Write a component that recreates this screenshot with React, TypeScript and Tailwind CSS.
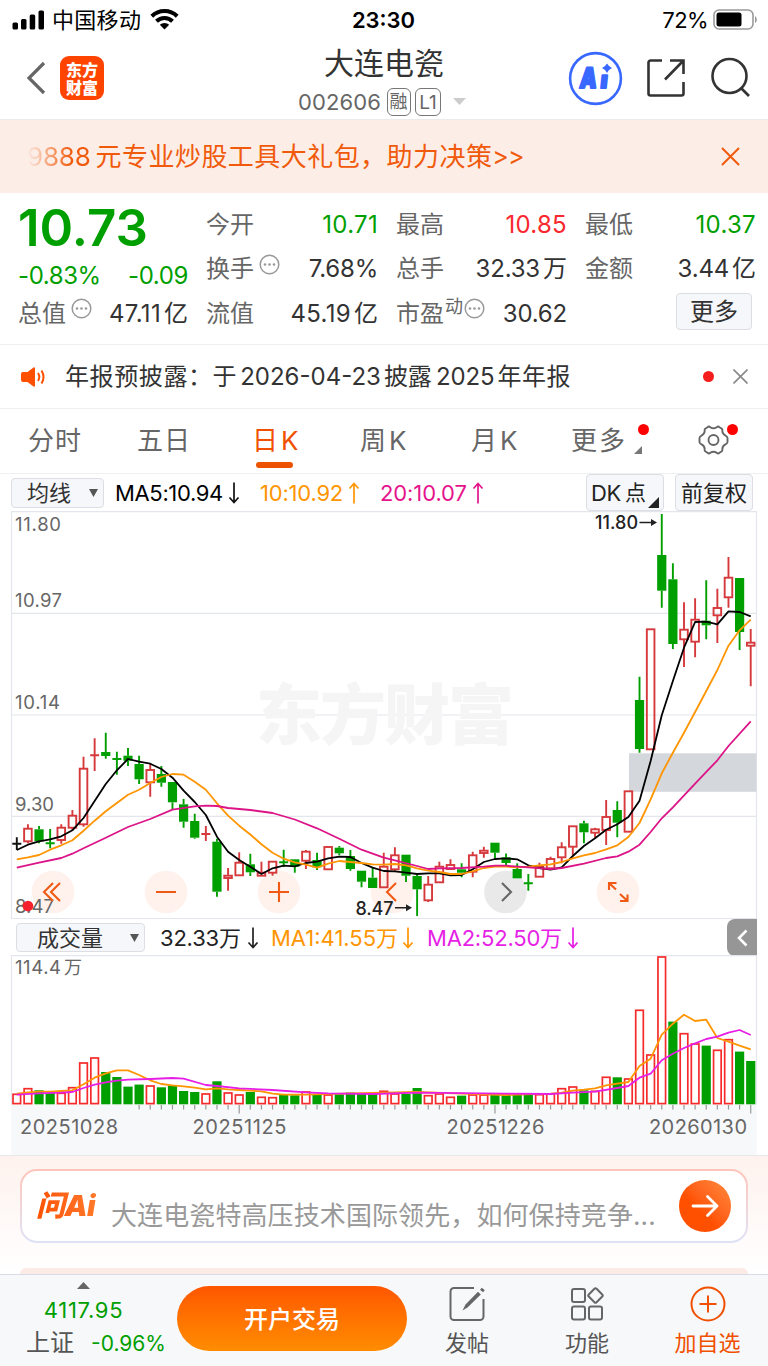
import { ReactNode } from 'react';

type Candle = [string, number, number, number, number];
type Point = [number, number];

const STEP = 11.12;
const FIRST = 16.8;
const GREEN = '#009f00';
const RED = '#d6393c';
const VOL_RED = '#f52b2b';

const FONT = "font-['Inter','Noto_Sans_CJK_SC',sans-serif]";

const xAt = (i: number) => FIRST + i * STEP;

// kind, high, body top, body bottom, low
const candles: Candle[] = [
	['k', 326.3, 332.7, 332.7, 339],
	['r', 313.3, 317.7, 330.3, 332.3],
	['g', 315, 318.3, 330.3, 332.3],
	['g', 318, 332.3, 332.3, 337.3],
	['r', 313.3, 316.7, 329, 332.7],
	['r', 299, 304.7, 316.7, 319],
	['r', 245.7, 257.7, 313.3, 315.7],
	['r', 227.3, 244.3, 244.3, 260],
	['g', 221.7, 241, 245, 247.7],
	['g', 240.7, 248, 248, 263.7],
	['g', 237, 244.7, 249.7, 255],
	['g', 244.7, 253, 268.3, 273],
	['r', 252, 259, 271.3, 285.7],
	['g', 255, 263, 271.7, 275.7],
	['g', 271, 271, 291.3, 298.3],
	['g', 288, 293.3, 310.7, 316.7],
	['g', 302.7, 310, 326.7, 327.7],
	['r', 315, 323, 323, 330],
	['g', 327.7, 330.7, 380.7, 385.7],
	['r', 357, 364.7, 367, 379.7],
	['r', 341.3, 351.7, 364.3, 364.3],
	['g', 342.7, 353.3, 361.3, 365],
	['r', 350.7, 361.7, 364.7, 364.7],
	['r', 350.7, 350.7, 361.7, 364.7],
	['g', 338.7, 351.3, 351.3, 355.7],
	['g', 348.3, 348.3, 355.7, 361.7],
	['r', 339, 340.7, 349.7, 358],
	['g', 341.7, 349, 356.3, 359],
	['r', 336, 336, 358.3, 358.3],
	['g', 335, 336.7, 342.3, 344.3],
	['g', 339, 345, 358, 359.7],
	['g', 359.7, 359.7, 370.7, 376.3],
	['g', 356.3, 366.7, 377, 377],
	['r', 341.7, 355.7, 376.3, 376.3],
	['r', 336.3, 344.3, 358.3, 360.7],
	['g', 343.7, 343.7, 364.7, 371],
	['g', 362.3, 365, 378.3, 405],
	['r', 365, 373.7, 389.3, 391],
	['r', 350.7, 355.7, 371.3, 371.3],
	['r', 348.3, 354, 358, 359],
	['g', 352.3, 358.3, 361.7, 366.3],
	['r', 340.7, 344.3, 360.7, 366.3],
	['r', 335.7, 339.7, 342, 346.7],
	['g', 331.7, 331.7, 341.7, 349],
	['g', 342.5, 346.3, 352, 355],
	['g', 352.3, 358, 367.3, 367.3],
	['g', 363, 372.3, 372.3, 379.7],
	['r', 351.7, 355.7, 365.7, 365.7],
	['r', 345.7, 348, 357.3, 357.3],
	['r', 331.3, 336.3, 346.3, 352.3],
	['r', 315.3, 315.3, 335.7, 344],
	['g', 309.7, 312.3, 321.3, 332.3],
	['r', 316.7, 318.3, 321.7, 326.7],
	['r', 289, 306, 319, 334],
	['g', 290.3, 299, 311.7, 326.3],
	['r', 280.3, 280.3, 320.7, 320.7],
	['g', 165.7, 189, 238, 241.7],
	['r', 118.3, 118.3, 238.3, 238.3],
	['g', 3, 44, 79.7, 96.7],
	['g', 52.3, 68.3, 133, 138],
	['r', 91.3, 118.7, 128.3, 156],
	['r', 87.3, 108.7, 130.7, 146.3],
	['g', 69.3, 109.7, 114.3, 128.3],
	['r', 77.7, 97, 104.3, 132],
	['r', 46, 66.7, 86.3, 96.7],
	['g', 67, 67, 121, 139],
	['r', 118, 131.7, 134.7, 175.3]
];

const ma5 = [
	339, 333.7, 330.3, 328.3, 325.3, 319.3, 307, 290, 273, 259.3, 248, 250.7, 252.7, 258, 266.7,
	279.7, 291, 304, 325.7, 340.7, 349, 355.7, 363, 357.3, 354.7, 355.3, 352, 350.7, 347.3, 345.7,
	346, 352, 356.7, 360, 360.3, 361.7, 363, 362.3, 362.3, 364.3, 364, 358.3, 351, 348, 347.3,
	348.3, 354.3, 357, 358.7, 356.3, 345, 335, 327.3, 318.7, 313.3, 306, 289.7, 250, 204.3, 170,
	136.7, 111, 110.7, 113.3, 100.3, 101, 105.3
];

const ma10 = [
	348.3, 346.3, 344, 338.7, 334.3, 329.3, 319.7, 309.7, 300.3, 292, 283.7, 278.7, 272, 266, 263,
	263.7, 270.7, 278.7, 292.3, 304.7, 314.7, 323.5, 333.3, 341.7, 347.7, 351.3, 353.7, 356.7,
	352.7, 350, 351, 352, 353.3, 353.7, 353, 354.3, 357.3, 359.7, 361, 363, 363, 360.3, 357, 355.7,
	355.7, 356.3, 355.7, 354.3, 353.3, 351, 347.3, 344.3, 342, 338.3, 334.3, 326, 312, 288.3, 262.3,
	241.7, 221.7, 201, 180, 159, 134.7, 119.3, 108.7
];

const ma20: Point[] = [
	[0, 356.7], [2, 351.7], [4, 347], [5, 342.7], [6, 337.3], [8, 326.7], [10, 316], [12, 308],
	[14, 298.7], [16, 295.3], [17, 294.7], [18, 295], [19, 297], [21, 299], [23, 302], [25, 308.5],
	[27, 317.3], [29, 327.7], [31, 338.7], [33, 346.7], [34, 349.3], [36, 355], [37, 358],
	[38, 357.3], [40, 357], [42, 355.7], [43, 354.7], [44, 354.7], [46, 356.3], [48, 358],
	[49, 357], [51, 352.7], [53, 347], [54, 345.3], [55, 340.7], [56, 333.7], [57, 321],
	[58, 307.3], [59, 296.3], [61, 272.7], [63, 249.3], [64, 235], [66, 210.3]
];

const volumeColors = 'rrggrrrrggggrggggrgrrgrrggrgrggggrrggrrrgrrggggrrrrgrrgrrrrgrrgrrgg';

const volumes = [
	10.7, 16.3, 14, 11.7, 11.7, 17.3, 42, 47, 32.3, 27.3, 17.7, 19.7, 19, 17, 18.7, 13.3, 12.3, 11,
	23, 12, 10, 12.3, 7.7, 7.3, 9.7, 9, 13, 9.7, 10, 10, 11.7, 11, 10.3, 13.7, 11, 10.3, 16.3, 9.3,
	11, 7.7, 8.7, 10, 10, 10, 9.3, 9.7, 9.3, 10.3, 11, 16.3, 18, 14, 13.7, 27.7, 27, 26, 94.7, 50,
	148, 82.7, 71.3, 61, 58.7, 54.7, 65.3, 52.7, 43.3
];

const volMa1: Point[] = [
	[0, 138.7], [1, 137.3], [2, 136.7], [3, 136.7], [4, 136], [5, 135.3], [6, 129.3], [7, 122.7],
	[8, 118.3], [9, 115.3], [10, 115.3], [11, 120], [12, 125.3], [13, 129], [14, 130.3],
	[15, 131.3], [16, 132.7], [17, 134.3], [18, 133.3], [19, 134.3], [20, 135], [21, 135.7],
	[22, 136.3], [23, 138.7], [24, 139.7], [26, 139.7], [30, 138.3], [36, 137], [40, 138.7],
	[44, 140], [48, 138.7], [49, 137.7], [50, 135.7], [51, 134.7], [52, 133.3], [53, 130.3],
	[54, 128.7], [55, 127], [56, 111], [57, 103.7], [58, 79.7], [59, 68.7], [60, 59.7], [61, 66],
	[62, 64.7], [63, 83], [64, 86.7], [65, 90.7], [66, 94.3]
];

const volMa2: Point[] = [
	[0, 139.7], [2, 138.3], [4, 137.7], [5, 137], [6, 133], [7, 129.7], [8, 127.3], [9, 125.7],
	[10, 124.7], [12, 124], [14, 123], [15, 123.7], [17, 130], [18, 131], [20, 133.3], [23, 135],
	[26, 137.3], [28, 138.3], [32, 139], [36, 137.7], [44, 138.7], [48, 139], [50, 137.7],
	[52, 136.7], [54, 133], [55, 131], [56, 122.7], [57, 118.7], [58, 105.3], [59, 98.7], [60, 93],
	[61, 88.3], [62, 84], [63, 81.7], [64, 77.7], [65, 75], [66, 80]
];

const toPoints = (list: Point[]) => list.map(([i, y]) => `${xAt(i)},${y}`).join(' ');
const indexed = (list: number[]) => list.map((y, i): Point => [i, y]);

function StatusBar() {
	return (
		<div className="h-10 pb-px grid grid-cols-3 items-center pl-[12px] pr-[10px] text-black">
			<div className="flex items-center">
				<svg width="33" height="20" viewBox="0 0 33 20">
					<rect x="0.5" y="12.5" width="5.5" height="7" rx="1.5" />
					<rect x="9" y="9" width="5.5" height="10.5" rx="1.5" />
					<rect x="17.7" y="4.5" width="5.5" height="15" rx="1.5" />
					<rect x="26.5" y="0.5" width="5.5" height="19" rx="1.5" />
				</svg>
				<span className="ml-[7px] text-[22px] tracking-[0.3px] leading-none whitespace-nowrap">中国移动</span>
				<svg className="ml-[9px]" width="29" height="21" viewBox="0 0 29 21">
					<path
						d="M1.8 7.2a18.3 18.3 0 0 1 25.4 0M6.5 12.2a11.5 11.5 0 0 1 16 0"
						fill="none"
						stroke="#000"
						strokeWidth="4"
					/>
					<path d="M14.5 20.5 9.8 15.8a6.8 6.8 0 0 1 9.4 0z" />
				</svg>
			</div>
			<div className="text-center text-[22px] font-semibold leading-none -ml-[3px]">23:30</div>
			<div className="flex items-center justify-end">
				<span className="text-[22px] tracking-[-0.6px] leading-none">72%</span>
				<svg className="ml-[5px]" width="45" height="21" viewBox="0 0 45 21">
					<rect x="1" y="1" width="39" height="19" rx="5" fill="none" stroke="#999" strokeWidth="1.6" />
					<rect x="3.5" y="3.5" width="25" height="14" rx="2.5" />
					<path d="M42 7.2c2.4.6 2.4 6 0 6.6z" fill="#999" />
				</svg>
			</div>
		</div>
	);
}

function Header() {
	return (
		<header className="h-20 border-b border-[#e9ebee] grid grid-cols-[250px_1fr_250px] pt-[2px]">
			<div className="flex items-center pl-[26px] pb-[6px]">
				<svg width="20" height="34" viewBox="0 0 20 34" fill="none" stroke="#666" strokeWidth="3.2">
					<path d="M18 2 3 17l15 15" />
				</svg>
				<div className="ml-[14px] w-11 h-11 rounded-[9px] bg-[#ff4400] flex flex-col items-center justify-center font-['Noto_Sans_CJK_SC',sans-serif] text-white font-black text-[16px] leading-[18px]">
					<span>东方</span>
					<span>财富</span>
				</div>
			</div>
			<div className="flex flex-col items-center">
				<h1 className="text-[30px] leading-[42px] text-[#333]">大连电瓷</h1>
				<div className="flex items-center h-[35px] text-[#666] -ml-[4px]">
					<span className="text-[22px] tracking-[0.1px] leading-none">002606</span>
					<span className="ml-[6px] w-6 h-7 border border-[#777] rounded-[6px] text-[18px] leading-[26px] text-center">
						<span className="-ml-px">融</span>
					</span>
					<span className="ml-[4px] w-[26px] h-7 border border-[#777] rounded-[6px] text-[19px] leading-[27px] text-center">
						L1
					</span>
					<svg className="ml-[12px]" width="13" height="8" viewBox="0 0 13 8">
						<path d="M0 0h13L6.5 7z" fill="#ccc" />
					</svg>
				</div>
			</div>
			<div className="flex items-center pl-[50px] pb-[5px]">
				<svg width="55" height="55" viewBox="0 0 55 55">
					<circle cx="27.5" cy="27.5" r="25.4" fill="none" stroke="#3868ff" strokeWidth="2.6" />
					<g
						transform="skewX(-6)"
						fill="#3868ff"
						stroke="#3868ff"
						strokeWidth="2.2"
						strokeLinejoin="round"
						fontWeight="900"
					>
						<text x="15" y="37" fontSize="28" textLength="17" lengthAdjust="spacingAndGlyphs">A</text>
						<text x="36" y="37.5" fontSize="23">ı</text>
					</g>
					<path d="M39 12.5 41 15l3 2-3 2-2 3-2-3-3-2 3-2z" fill="#3868ff" />
				</svg>
				<svg className="ml-[23px]" width="40" height="40" viewBox="0 0 40 40" fill="none" stroke="#333" strokeWidth="2.6">
					<path d="M16 2.5H4.5a2 2 0 0 0-2 2v31a2 2 0 0 0 2 2h31a2 2 0 0 0 2-2V24" />
					<path d="M24 2.5h13.5V16M37 3 19 21.5" />
				</svg>
				<svg className="ml-[24px]" width="42" height="42" viewBox="0 0 42 42" fill="none" stroke="#333" strokeWidth="2.6">
					<circle cx="19.5" cy="19" r="17" />
					<path d="m31 31 8 8" />
				</svg>
			</div>
		</header>
	);
}

function Banner() {
	return (
		<div className="h-[73px] bg-[#fcede7] flex items-center justify-between pl-[27px] pr-[28px] text-[#f05a0a]">
			<div className="flex items-center text-[26px] leading-none whitespace-nowrap">
				<span className="mr-[5px] tracking-[-0.2px] bg-linear-to-r from-[#f05a0a]/0 to-[#f05a0a] to-70% bg-clip-text text-transparent">
					9888
				</span>
				<span className="tracking-[0.45px]">元专业炒股工具大礼包，助力决策</span>
				<span className="text-[25px] tracking-[-0.8px]">&gt;&gt;</span>
			</div>
			<svg width="19" height="19" viewBox="0 0 19 19" stroke="#f05a0a" strokeWidth="2">
				<path d="m1 1 17 17M18 1 1 18" />
			</svg>
		</div>
	);
}

function Hint() {
	return (
		<svg className="ml-[5px] mb-[10px]" width="21" height="21" viewBox="0 0 21 21">
			<circle cx="10.5" cy="10.5" r="9.3" fill="none" stroke="#999" strokeWidth="1.5" />
			<g fill="#999">
				<circle cx="6" cy="10.5" r="1.3" />
				<circle cx="10.5" cy="10.5" r="1.3" />
				<circle cx="15" cy="10.5" r="1.3" />
			</g>
		</svg>
	);
}

interface StatProps {
	label: string;
	value: string;
	unit?: string;
	color?: string;
	extra?: ReactNode;
}

function Stat({ label, value, unit, color = 'text-[#333]', extra }: StatProps) {
	// the digit 1 is narrow, so loosen the numbers that contain it
	const spacing = value.includes('1') ? 'tracking-[0.3px]' : 'tracking-[-0.2px]';

	return (
		<div className="h-[44.5px] flex items-center justify-between leading-none whitespace-nowrap">
			<div className="flex items-center text-[24px] text-[#666]">
				{label}
				{extra}
			</div>
			<div className={`flex items-center ${color}`}>
				<span className={`text-[24px] ${spacing}`}>{value}</span>
				{unit && <span className="ml-[3px] text-[24px]">{unit}</span>}
			</div>
		</div>
	);
}

function Quote() {
	return (
		<section className="h-[152px] border-b border-[#f0f0f2] pl-[18px] pr-[12px] pt-[9.5px] grid grid-cols-[170px_172px_171px_171px] gap-x-[18px]">
			<div className="text-[#009f00]">
				<div className="h-[51px] text-[51px] leading-[49px] font-semibold">10.73</div>
				<div className="h-[38px] flex items-center justify-between text-[24px] pt-[6px] tracking-[-0.4px] leading-none">
					<span>-0.83%</span>
					<span>-0.09</span>
				</div>
				<Stat label="总值" value="47.11" unit="亿" extra={<Hint />} />
			</div>
			<div>
				<Stat label="今开" value="10.71" color="text-[#009f00]" />
				<Stat label="换手" value="7.68%" extra={<Hint />} />
				<Stat label="流值" value="45.19" unit="亿" />
			</div>
			<div>
				<Stat label="最高" value="10.85" color="text-[#f9282e]" />
				<Stat label="总手" value="32.33" unit="万" />
				<Stat
					label="市盈"
					value="30.62"
					extra={
						<>
							<span className="ml-px mb-[13px] text-[18px]">动</span>
							<span className="-ml-[4px]">
								<Hint />
							</span>
						</>
					}
				/>
			</div>
			<div>
				<Stat label="最低" value="10.37" color="text-[#009f00]" />
				<Stat label="金额" value="3.44" unit="亿" />
				<div className="flex justify-end pr-[4px] pt-px">
					<button className="w-[76px] h-[37px] pt-px rounded-[4px] border border-[#dcdee4] bg-[#f6f7fa] text-[24px] leading-none text-[#333]">
						更多
					</button>
				</div>
			</div>
		</section>
	);
}

function Notice() {
	return (
		<div className="h-16 border-b border-[#f0f0f2] flex items-center pl-[21px] pr-[20px] text-[#333]">
			<svg width="24" height="20" viewBox="0 0 24 20">
				<path d="M2 5h4.5l6-4.6Q14 0 14 1.5v17q0 1.5-1.5 1.1L6.5 15H2q-2 0-2-2V7q0-2 2-2z" fill="#ff5000" />
				<path d="M17 6q2.6 4 0 8M20.5 3.5q4 6.5 0 13" fill="none" stroke="#ff5000" strokeWidth="2" />
			</svg>
			<div className="ml-[20px] flex items-center text-[24px] leading-none whitespace-nowrap">
				<span className="tracking-[0.6px]">年报预披露：于</span>
				<span className="ml-[3px]">2026-04-23</span>
				<span className="ml-[3px]">披露</span>
				<span className="ml-[4px] tracking-[-0.1px]">2025</span>
				<span className="ml-[3px] tracking-[0.5px]">年年报</span>
			</div>
			<span className="ml-auto w-[11px] h-[11px] rounded-full bg-[#f51e1e]" />
			<svg className="ml-[19px]" width="15" height="15" viewBox="0 0 15 15" stroke="#888" strokeWidth="1.6">
				<path d="m0.5 0.5 14 14M14.5 0.5l-14 14" />
			</svg>
		</div>
	);
}

function Tabs() {
	return (
		<nav className="relative h-[65px] border-b border-[#f0f0f2] pl-[28px] flex items-center text-[26px] leading-none text-[#666] whitespace-nowrap">
			<span className="w-[109px] tracking-[1px]">分时</span>
			<span className="w-[115px] tracking-[1px]">五日</span>
			<span className="w-[108px] flex gap-[3px] text-[#f05000]">
				<span>日</span>
				<span>K</span>
			</span>
			<span className="w-[111px] flex gap-[3px]">
				<span>周</span>
				<span>K</span>
			</span>
			<span className="w-[100px] flex gap-[3px]">
				<span>月</span>
				<span>K</span>
			</span>
			<span className="tracking-[2px]">更多</span>
			<svg className="ml-[7px] mt-[18px]" width="8" height="8" viewBox="0 0 8 8">
				<path d="M8 0v8H0z" fill="#777" />
			</svg>
			<svg className="ml-[56px] mb-[2px]" width="31" height="30" viewBox="0 0 31 30" fill="none" stroke="#666" strokeWidth="1.9">
				<path
					strokeLinejoin="round"
					d="M9.5 2.2Q11 1 12.3 2.2q3.2 2.2 6.4 0Q20 1 21.5 2.2l2.3 1.5q.8.8.5 2.3.2 3.3 3.5 4.8 1.5.6 1.7 2.2v4q-.2 1.6-1.7 2.2-3.3 1.5-3.5 4.8.3 1.5-.5 2.3l-2.3 1.5q-1.5 1.2-2.8 0-3.2-2.2-6.4 0-1.3 1.2-2.8 0l-2.3-1.5q-.8-.8-.5-2.3-.2-3.3-3.5-4.8Q1.7 18.6 1.5 17v-4q.2-1.6 1.7-2.2 3.3-1.5 3.5-4.8-.3-1.5.5-2.3z"
				/>
				<circle cx="15.5" cy="15" r="5" />
			</svg>
			<span className="absolute left-[256px] bottom-[5px] w-[37px] h-[6px] rounded-full bg-[#ec5200]" />
			<span className="absolute left-[638px] top-[15px] w-[11px] h-[11px] rounded-full bg-[#ff0000]" />
			<span className="absolute left-[727px] top-[15px] w-[11px] h-[11px] rounded-full bg-[#ff0000]" />
		</nav>
	);
}

function Arrow({ up, color }: { up?: boolean; color: string }) {
	return (
		<svg width="12" height="22" viewBox="0 0 12 22" fill="none" stroke={color} strokeWidth="1.7">
			{up ? <path d="M6 21.5V1.5M1.5 6.5 6 1.5l4.5 5" /> : <path d="M6 .5v20M1.5 15.5 6 20.5l4.5-5" />}
		</svg>
	);
}

function MaRow() {
	return (
		<div className="h-[37px] pl-[11px] pr-[15px] flex items-center text-[22px] leading-none whitespace-nowrap">
			<button className="w-[93px] h-[30px] pl-[15px] pr-[5px] flex items-center justify-between rounded-[4px] border border-[#dcdee4] bg-[#f6f7fa] text-[#333] text-[22px]">
				均线
				<svg width="9" height="8" viewBox="0 0 9 8">
					<path d="M0 0h9L4.5 8z" fill="#555" />
				</svg>
			</button>
			<span className="ml-[11px] w-[113px] tracking-[-0.35px] text-black">MA5:10.94</span>
			<Arrow color="#111" />
			<span className="ml-[20px] w-[88px] tracking-[-0.2px] text-[#ff9500]">10:10.92</span>
			<Arrow up color="#ff9500" />
			<span className="ml-[20px] w-[92px] tracking-[-0.1px] text-[#e6148c]">20:10.07</span>
			<Arrow up color="#e6148c" />
			<button className="relative ml-auto w-[78px] h-[37px] pl-[4px] flex items-center gap-[4px] rounded-[4px] border border-[#dcdee4] bg-[#f6f7fa] text-[#222]">
				<span className="tracking-[-0.3px]">DK</span>
				<span className="text-[21px]">点</span>
				<svg className="absolute right-[4px] bottom-[2px]" width="11" height="11" viewBox="0 0 11 11">
					<path d="M11 0v11H0z" fill="#222" />
				</svg>
			</button>
			<button className="ml-[11px] w-[78px] h-[37px] rounded-[4px] border border-[#dcdee4] bg-[#f6f7fa] text-[#222] text-[22px]">
				前复权
			</button>
		</div>
	);
}

function CandleShape({ candle, x }: { candle: Candle; x: number }) {
	const [kind, high, top, bottom, low] = candle;
	const color = kind === 'g' ? GREEN : kind === 'r' ? RED : '#111';

	if (top === bottom) {
		return <path d={`M${x} ${high}V${low}M${x - 4.5} ${top}h9`} stroke={color} strokeWidth="1.9" fill="none" />;
	}
	return (
		<g stroke={color} strokeWidth="1.9">
			<path d={`M${x} ${high}V${top}M${x} ${bottom}V${low}`} />
			{kind === 'g' ? (
				<rect x={x - 4.6} y={top} width="9.2" height={bottom - top} fill={color} stroke="none" />
			) : (
				<rect x={x - 3.8} y={top} width="7.6" height={bottom - top} fill="none" />
			)}
		</g>
	);
}

function PriceChart() {
	const buttons = [53, 166, 279, 392, 505.5, 618];

	return (
		<svg className="block" width="768" height="408" viewBox="0 0 768 408">
			<g stroke="#e4e6ee" strokeWidth="1.2" fill="none">
				<path d="M11.5 408V.6H756.5V408M11.5 102.3h745M11.5 204h745M11.5 305.3h745" />
				<path d="M11.5 407.5h745" />
			</g>
			<text x="256" y="228" fontSize="66" fontWeight="900" fill="#f5f5f6" textLength="258">
				东方财富
			</text>
			<rect x="629" y="242.3" width="127.5" height="38.5" fill="#d4d7dc" />
			{buttons.map((x, i) => (
				<circle key={x} cx={x} cy="381" r="21.3" fill={i === 4 ? '#e9e9e9' : '#fff1ec'} />
			))}
			<g fontSize="18.5" fill="#666">
				<text x="15" y="20" textLength="46">11.80</text>
				<text x="15" y="96" textLength="47">10.97</text>
				<text x="15" y="198" textLength="45">10.14</text>
				<text x="15" y="300" textLength="39">9.30</text>
				<text x="15" y="402" textLength="39">8.47</text>
			</g>
			<circle cx="28" cy="395" r="5.3" fill="#f5222d" />
			{candles.map((candle, i) => (
				<CandleShape key={i} candle={candle} x={xAt(i)} />
			))}
			<g fill="none" strokeWidth="1.8" strokeLinejoin="round">
				<polyline points={toPoints(indexed(ma5))} stroke="#000" />
				<polyline points={toPoints(indexed(ma10))} stroke="#ff9500" />
				<polyline points={toPoints(ma20)} stroke="#dc1487" />
			</g>
			<g fontSize="18" fontWeight="500" fill="#222">
				<text x="595" y="18" textLength="43">11.80</text>
				<text x="355.5" y="403.5" textLength="38">8.47</text>
			</g>
			<g stroke="#222" strokeWidth="1.5">
				<path d="M639.5 11.5H652M395 396.7h12" />
				<path d="m657 11.5-6-3.5v7zM412 396.7l-6-3.5v7z" fill="#222" stroke="none" />
			</g>
			<g fill="none" stroke="#f05a14" strokeWidth="2.1">
				<path d="m53 372-9 9 9 9M60 372l-9 9 9 9" />
				<path d="M156 381h20M269 381h20M279 371v20" />
				<path d="m396 372-9 9 9 9" />
				<path d="m502 372 9 9-9 9" stroke="#666" />
				<path d="M609 379v-7h7.5M609.5 372.5l6.5 6M627.5 383.5v6.5H620M627 389.5l-7-6.500" />
			</g>
		</svg>
	);
}

function VolumeHeader() {
	return (
		<div className="h-9 pt-px pl-[16px] flex items-center text-[22px] leading-none whitespace-nowrap">
			<button className="w-[129px] h-[29px] pl-[20px] pr-[5px] flex items-center justify-between rounded-[4px] border border-[#dcdee4] bg-[#f6f7fa] text-[#333]">
				成交量
				<svg width="9" height="8" viewBox="0 0 9 8">
					<path d="M0 0h9L4.5 8z" fill="#555" />
				</svg>
			</button>
			<span className="ml-[15px] w-[87px] tracking-[-0.2px] text-[#222]">32.33万</span>
			<Arrow color="#222" />
			<span className="ml-[12px] w-[131px] text-[#ff9500]">MA1:41.55万</span>
			<Arrow color="#ff9500" />
			<span className="ml-[13px] w-[140px] tracking-[-0.2px] text-[#e61ee6]">MA2:52.50万</span>
			<Arrow color="#e61ee6" />
			<div className="ml-auto mr-[11px] w-[30px] h-[37px] rounded-l-[8px] bg-[#969696] flex items-center justify-center">
				<svg width="11" height="18" viewBox="0 0 11 18" fill="none" stroke="#fff" strokeWidth="2.6">
					<path d="M9.5 1.5 2 9l7.5 7.5" />
				</svg>
			</div>
		</div>
	);
}

function VolumeChart() {
	return (
		<svg className="block" width="768" height="200" viewBox="0 0 768 200">
			<rect x="11.5" y="149.5" width="745" height="50.5" fill="#f7f8fa" />
			<path d="M11.5 149.5V.6H756.5V149.5" fill="none" stroke="#e4e6ee" strokeWidth="1.2" />
			<text x="15" y="19" fontSize="18.5" fill="#666" textLength="46">114.4</text>
			<text x="64" y="19" fontSize="18" fill="#666">万</text>
			{volumes.map((h, i) =>
				volumeColors[i] === 'g' ? (
					<rect key={i} x={xAt(i) - 4.6} y={149.3 - h} width="9.2" height={h} fill={GREEN} />
				) : (
					<rect
						key={i}
						x={xAt(i) - 3.8}
						y={150 - h}
						width="7.6"
						height={h - 1.4}
						fill="#fff"
						stroke={VOL_RED}
						strokeWidth="1.7"
					/>
				)
			)}
			<g fill="none" strokeWidth="1.8" strokeLinejoin="round">
				<polyline points={toPoints(volMa1)} stroke="#ff9500" />
				<polyline points={toPoints(volMa2)} stroke="#e61ee6" />
			</g>
			{volumes.map((_, i) =>
				i < 11 ? null : (
					<path
						key={i}
						d={`M${xAt(i)} 150v${i === 20 || i === 43 || i === 66 ? 8.5 : 4.5}`}
						stroke="#999"
						strokeWidth="1.2"
					/>
				)
			)}
			<g fontSize="20" fill="#666">
				<text x="20" y="178.5" textLength="98">20251028</text>
				<text x="192.5" y="178.5" textLength="94">20251125</text>
				<text x="446.5" y="178.5" textLength="98">20251226</text>
				<text x="649" y="178.5" textLength="98">20260130</text>
			</g>
		</svg>
	);
}

function AskAi() {
	return (
		<section className="h-[119px] border-t border-[#e6e8ee] px-5 pt-[13px] flex flex-col justify-between overflow-hidden bg-linear-to-b from-[#fef2ee] to-white">
			<div className="rounded-[17px] p-[2px] bg-linear-to-b from-[#ffc4ba] to-[#dde3f6]">
				<div className="h-[70px] rounded-[15px] bg-white flex items-center pl-[14px] pr-[15px]">
					<span className="w-[63px] flex items-center text-[29px] leading-[36px] font-black italic tracking-[-0.5px] whitespace-nowrap bg-linear-to-r from-[#ff5000] to-[#ff7a2a] bg-clip-text text-transparent">
						问Ai
					</span>
					<span className="ml-[12px] mt-[20px] text-[26px] tracking-[0.1px] leading-none text-[#999] whitespace-nowrap">
						大连电瓷特高压技术国际领先，如何保持竞争...
					</span>
					<span className="ml-auto w-[52px] h-[52px] shrink-0 rounded-full bg-linear-to-bl from-[#ff8a3c] to-[#ff5000] to-60% flex items-center justify-center">
						<svg width="28" height="24" viewBox="0 0 28 24" fill="none" stroke="#fff" strokeWidth="2.8" strokeLinecap="round" strokeLinejoin="round">
							<path d="M2 12h24M16.5 2.5 26 12l-9.5 9.5" />
						</svg>
					</span>
				</div>
			</div>
			<div className="h-[6px] rounded-t-[17px] bg-[#fcebe4]" />
		</section>
	);
}

function BottomBar() {
	return (
		<footer className="h-[92px] border-t border-[#d8dce4] bg-[#f6f8fa] flex text-[#555] whitespace-nowrap">
			<div className="w-[177px] flex flex-col items-center pt-[7px] leading-none">
				<svg className="mr-[10px]" width="13" height="7" viewBox="0 0 13 7">
					<path d="M6.5 0 13 7H0z" fill="#666" />
				</svg>
				<span className="mt-[10px] mr-[10px] text-[22px] tracking-[0.7px] text-[#009f00]">4117.95</span>
				<div className="mt-[10px] w-[140px] mr-[-15px] flex items-center justify-between">
					<span className="text-[24px]">上证</span>
					<span className="text-[21px] text-[#009f00]">-0.96%</span>
				</div>
			</div>
			<button className="mt-[11px] pt-[2px] w-[230px] h-[65px] rounded-full bg-linear-to-b from-[#ff5500] to-[#ff8c00] text-white text-[24px] font-medium">
				开户交易
			</button>
			<div className="w-[120px] flex flex-col items-center pt-[11px]">
				<svg width="36" height="36" viewBox="0 0 36 36" fill="none" stroke="#666" strokeWidth="2">
					<path d="M25 2H5a3.5 3.5 0 0 0-3.5 3.5v25A3.5 3.5 0 0 0 5 34h26a3.5 3.5 0 0 0 3.5-3.5V13" />
					<path d="m32.5 5 1.8-2" strokeWidth="4" />
					<path d="m13.5 24.5 3-6L29 5.8l2.8 2.6L18.5 21.5z" fill="#666" stroke="none" />
				</svg>
				<span className="mt-[10px] text-[22px] leading-none">发帖</span>
			</div>
			<div className="w-[120px] flex flex-col items-center pt-[11px]">
				<svg width="34" height="36" viewBox="0 0 34 36" fill="none" stroke="#666" strokeWidth="2">
					<rect x="2" y="3" width="13" height="13" rx="2" />
					<rect x="2" y="20.5" width="13" height="13" rx="2" />
					<rect x="19" y="20.5" width="13" height="13" rx="2" />
					<rect x="20" y="4" width="11" height="11" rx="1.5" transform="rotate(45 25.5 9.5)" />
				</svg>
				<span className="mt-[10px] text-[22px] leading-none">功能</span>
			</div>
			<div className="w-[121px] flex flex-col items-center pt-[11px] text-[#f05000]">
				<svg width="36" height="36" viewBox="0 0 36 36" fill="none" stroke="#f05000" strokeWidth="2">
					<circle cx="18" cy="18" r="16.5" />
					<path d="M9.5 18h17M18 9.5v17" />
				</svg>
				<span className="mt-[10px] text-[22px] leading-none">加自选</span>
			</div>
		</footer>
	);
}

function App() {
	return (
		<main className={`w-[768px] h-[1366px] overflow-hidden bg-white ${FONT}`}>
			<StatusBar />
			<Header />
			<Banner />
			<Quote />
			<Notice />
			<Tabs />
			<MaRow />
			<PriceChart />
			<VolumeHeader />
			<VolumeChart />
			<AskAi />
			<BottomBar />
		</main>
	);
}

export default App;
